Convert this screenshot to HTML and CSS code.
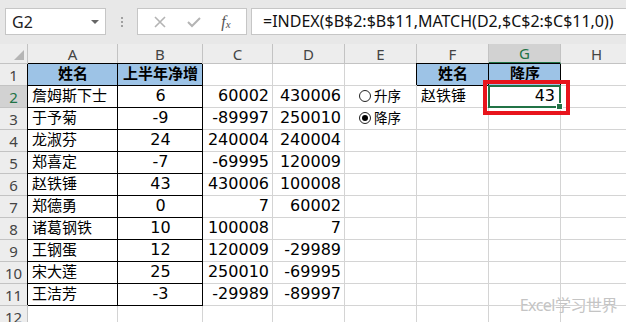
FILE: index.html
```html
<!DOCTYPE html>
<html lang="zh-CN">
<head>
    <meta charset="UTF-8">
    <title>INDEX MATCH 排序</title>
    <link rel="stylesheet" href="styles.css">
</head>
<body>
    <div class="app">
        <div class="formula-bar">
            <div class="name-box">
                <span>G2</span>
                <span class="caret"></span>
            </div>
            <div class="grip"><i></i><i></i><i></i></div>
            <div class="fx-buttons">
                <svg width="14" height="14" viewBox="0 0 14 14"><path d="M2 2 L12 12 M12 2 L2 12" stroke="#b4b4b4" stroke-width="1.6" fill="none"/></svg>
                <svg width="16" height="14" viewBox="0 0 16 14"><path d="M2 7 L6 11 L14 3" stroke="#b4b4b4" stroke-width="2" fill="none"/></svg>
                <span class="fx">f<sub>x</sub></span>
            </div>
            <div class="formula">=INDEX($B$2:$B$11,MATCH(D2,$C$2:$C$11,0))</div>
        </div>

        <div class="sheet">
            <!-- column headers -->
            <div class="corner"><span class="tri"></span></div>
            <div class="col-head">A</div>
            <div class="col-head">B</div>
            <div class="col-head">C</div>
            <div class="col-head">D</div>
            <div class="col-head">E</div>
            <div class="col-head">F</div>
            <div class="col-head active">G</div>
            <div class="col-head">H</div>

            <!-- row 1 -->
            <div class="row-head">1</div>
            <div class="cell tb th">姓名</div>
            <div class="cell tb th">上半年净增</div>
            <div class="cell"></div>
            <div class="cell"></div>
            <div class="cell"></div>
            <div class="cell tb th">姓名</div>
            <div class="cell tb th">降序</div>
            <div class="cell"></div>

            <!-- row 2 -->
            <div class="row-head active">2</div>
            <div class="cell tb">詹姆斯下士</div>
            <div class="cell tb ctr">6</div>
            <div class="cell num">60002</div>
            <div class="cell num">430006</div>
            <div class="cell radio-cell"><span class="radio"></span>升序</div>
            <div class="cell">赵铁锤</div>
            <div class="cell num sel">43<span class="mark"></span></div>
            <div class="cell"></div>

            <!-- row 3 -->
            <div class="row-head">3</div>
            <div class="cell tb">于予菊</div>
            <div class="cell tb ctr">-9</div>
            <div class="cell num">-89997</div>
            <div class="cell num">250010</div>
            <div class="cell radio-cell"><span class="radio checked"></span>降序</div>
            <div class="cell"></div>
            <div class="cell"></div>
            <div class="cell"></div>

            <!-- row 4 -->
            <div class="row-head">4</div>
            <div class="cell tb">龙淑芬</div>
            <div class="cell tb ctr">24</div>
            <div class="cell num">240004</div>
            <div class="cell num">240004</div>
            <div class="cell"></div>
            <div class="cell"></div>
            <div class="cell"></div>
            <div class="cell"></div>

            <!-- row 5 -->
            <div class="row-head">5</div>
            <div class="cell tb">郑喜定</div>
            <div class="cell tb ctr">-7</div>
            <div class="cell num">-69995</div>
            <div class="cell num">120009</div>
            <div class="cell"></div>
            <div class="cell"></div>
            <div class="cell"></div>
            <div class="cell"></div>

            <!-- row 6 -->
            <div class="row-head">6</div>
            <div class="cell tb">赵铁锤</div>
            <div class="cell tb ctr">43</div>
            <div class="cell num">430006</div>
            <div class="cell num">100008</div>
            <div class="cell"></div>
            <div class="cell"></div>
            <div class="cell"></div>
            <div class="cell"></div>

            <!-- row 7 -->
            <div class="row-head">7</div>
            <div class="cell tb">郑德勇</div>
            <div class="cell tb ctr">0</div>
            <div class="cell num">7</div>
            <div class="cell num">60002</div>
            <div class="cell"></div>
            <div class="cell"></div>
            <div class="cell"></div>
            <div class="cell"></div>

            <!-- row 8 -->
            <div class="row-head">8</div>
            <div class="cell tb">诸葛钢铁</div>
            <div class="cell tb ctr">10</div>
            <div class="cell num">100008</div>
            <div class="cell num">7</div>
            <div class="cell"></div>
            <div class="cell"></div>
            <div class="cell"></div>
            <div class="cell"></div>

            <!-- row 9 -->
            <div class="row-head">9</div>
            <div class="cell tb">王钢蛋</div>
            <div class="cell tb ctr">12</div>
            <div class="cell num">120009</div>
            <div class="cell num">-29989</div>
            <div class="cell"></div>
            <div class="cell"></div>
            <div class="cell"></div>
            <div class="cell"></div>

            <!-- row 10 -->
            <div class="row-head">10</div>
            <div class="cell tb">宋大莲</div>
            <div class="cell tb ctr">25</div>
            <div class="cell num">250010</div>
            <div class="cell num">-69995</div>
            <div class="cell"></div>
            <div class="cell"></div>
            <div class="cell"></div>
            <div class="cell"></div>

            <!-- row 11 -->
            <div class="row-head">11</div>
            <div class="cell tb">王洁芳</div>
            <div class="cell tb ctr">-3</div>
            <div class="cell num">-29989</div>
            <div class="cell num">-89997</div>
            <div class="cell"></div>
            <div class="cell"></div>
            <div class="cell"></div>
            <div class="cell"></div>

            <!-- row 12 -->
            <div class="row-head">12</div>
            <div class="cell"></div>
            <div class="cell"></div>
            <div class="cell"></div>
            <div class="cell"></div>
            <div class="cell"></div>
            <div class="cell"></div>
            <div class="cell"></div>
            <div class="cell"></div>
        </div>

        <div class="watermark">Excel学习世界</div>
    </div>
</body>
</html>
```

FILE: styles.css
```css
html, body {
    margin: 0;
    padding: 0;
    background: #ffffff;
}

body {
    font-family: 'DejaVu Sans', 'Noto Sans CJK SC', sans-serif;
    font-size: 15px;
    color: #000;
}

.app {
    position: relative;
    width: 626px;
    height: 322px;
    overflow: hidden;
}

/* formula bar */
.formula-bar {
    height: 44px;
    box-sizing: border-box;
    padding: 8px 0 0 5px;
    background: #e8e8e8;
    display: flex;
    align-items: flex-start;
}

.name-box {
    width: 101px;
    height: 27px;
    box-sizing: border-box;
    background: #fff;
    border: 1px solid #c6c6c6;
    display: flex;
    align-items: center;
    justify-content: space-between;
    padding: 0 6px 0 6px;
    font-family: 'Noto Sans', sans-serif;
    font-size: 16px;
    color: #222;
}

.caret {
    width: 0;
    height: 0;
    border-left: 4px solid transparent;
    border-right: 4px solid transparent;
    border-top: 4px solid #666;
}

.grip {
    width: 31px;
    height: 27px;
    display: flex;
    flex-direction: column;
    align-items: center;
    justify-content: center;
    gap: 2px;
}

.grip i {
    width: 2px;
    height: 2px;
    background: #a0a0a0;
}

.fx-buttons {
    width: 110px;
    height: 27px;
    box-sizing: border-box;
    background: #fff;
    border: 1px solid #c6c6c6;
    display: flex;
    align-items: center;
    justify-content: space-around;
    padding: 0 6px;
}

.fx {
    font-family: 'Liberation Serif', serif;
    font-style: italic;
    font-size: 16px;
    color: #555;
    line-height: 1;
}

.fx sub {
    font-size: 11px;
    vertical-align: -1px;
}

.formula {
    flex: 1;
    height: 27px;
    margin-left: 4px;
    box-sizing: border-box;
    background: #fff;
    border: 1px solid #c6c6c6;
    border-right: none;
    padding-left: 11px;
    font-family: 'Noto Sans', sans-serif;
    font-size: 16px;
    line-height: 25px;
    white-space: nowrap;
    color: #111;
}

/* sheet grid */
.sheet {
    display: grid;
    grid-template-columns: 28px 90px 85px 70px 72px 72px 72px 72px 72px;
    grid-template-rows: 20px repeat(12, 22px);
}

.corner,
.col-head,
.row-head {
    background: #ededed;
    border-right: 1px solid #c3c3c3;
    border-bottom: 1px solid #c3c3c3;
    box-sizing: border-box;
    font-family: 'Noto Sans', sans-serif;
    color: #444;
    font-size: 15px;
}

.corner {
    position: relative;
}

.corner .tri {
    position: absolute;
    right: 3px;
    bottom: 3px;
    width: 0;
    height: 0;
    border-left: 10px solid transparent;
    border-bottom: 10px solid #b5b5b5;
}

.col-head {
    display: flex;
    align-items: center;
    justify-content: center;
    line-height: 18px;
}

.col-head.active {
    background: #d2d2d2;
    color: #217346;
    border-bottom: 2px solid #217346;
}

.row-head {
    display: flex;
    align-items: flex-end;
    justify-content: center;
    line-height: 20px;
    padding-bottom: 0;
}

.row-head.active {
    background: #d2d2d2;
    color: #217346;
    border-right: 1px solid #217346;
}

.cell {
    border-right: 1px solid #d4d4d4;
    border-bottom: 1px solid #d4d4d4;
    box-sizing: border-box;
    display: flex;
    align-items: flex-end;
    padding: 0 3px 1px 4px;
    line-height: 20px;
    white-space: nowrap;
    overflow: hidden;
}

.cell.num {
    justify-content: flex-end;
    overflow: visible;
    font-size: 16px;
}

.cell.ctr {
    justify-content: center;
    font-size: 16px;
}

/* bordered table */
.cell.tb {
    border-right-color: #000;
    border-bottom-color: #000;
    box-shadow: -1px -1px 0 #000;
}

.cell.th {
    background: #9dc3e6;
    font-weight: bold;
    justify-content: center;
}

/* option buttons */
.radio-cell {
    padding-left: 14px;
    font-size: 13.5px;
    align-items: center;
    gap: 3px;
}

.radio {
    width: 10px;
    height: 10px;
    border: 1px solid #222;
    border-radius: 50%;
    background: #fff;
    position: relative;
}

.radio.checked::after {
    content: '';
    position: absolute;
    left: 2px;
    top: 2px;
    width: 6px;
    height: 6px;
    border-radius: 50%;
    background: #000;
}

/* active cell */
.cell.sel {
    position: relative;
    padding-right: 5px;
}

.cell.sel::before {
    content: '';
    position: absolute;
    left: -1px;
    top: -1px;
    right: -1px;
    bottom: -1px;
    border: 2px solid #217346;
}

.cell.sel::after {
    content: '';
    position: absolute;
    right: -3px;
    bottom: -3px;
    width: 5px;
    height: 5px;
    background: #217346;
    border: 1px solid #fff;
}

.mark {
    position: absolute;
    left: -6px;
    top: -6px;
    right: -10px;
    bottom: -8px;
    border: 4px solid #e8141c;
}

.watermark {
    position: absolute;
    right: 9px;
    bottom: 6px;
    font-family: 'Noto Sans', 'Noto Sans CJK SC', sans-serif;
    font-size: 16px;
    color: #c4c4c4;
    text-shadow: 0 0 1px #fff;
    letter-spacing: -0.5px;
}
```
